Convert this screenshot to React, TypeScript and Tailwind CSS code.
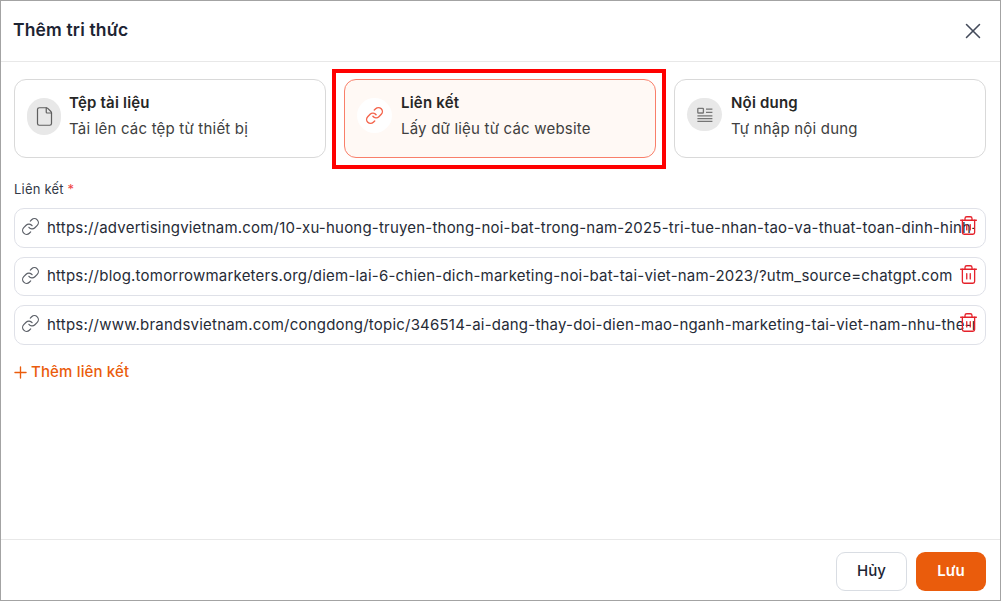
import { File, Link, Plus, Trash2, X } from "lucide-react";
import React from "react";

const links = [
  "https://advertisingvietnam.com/10-xu-huong-truyen-thong-noi-bat-trong-nam-2025-tri-tue-nhan-tao-va-thuat-toan-dinh-hinh-nganh-quang-cao",
  "https://blog.tomorrowmarketers.org/diem-lai-6-chien-dich-marketing-noi-bat-tai-viet-nam-2023/?utm_source=chatgpt.com",
  "https://www.brandsvietnam.com/congdong/topic/346514-ai-dang-thay-doi-dien-mao-nganh-marketing-tai-viet-nam-nhu-the-nao",
];

const NewsIcon = () => (
  <svg width="18" height="18" viewBox="0 0 18 18" fill="none" stroke="#757575" strokeWidth="1.3">
    <rect x="1.8" y="2.4" width="5.6" height="4.6" rx="0.6" />
    <path d="M10 3.2h6.4M10 6.4h6.4M1.4 9.8h15M1.4 12.6h15M1.4 15.4h15" />
  </svg>
);

interface CardProps {
  title: string;
  text: string;
  icon: React.ReactNode;
  iconClass: string;
  active?: boolean;
}

const SourceCard = ({ title, text, icon, iconClass, active }: CardProps) => {
  return (
    <div
      className={
        active
          ? "relative flex h-[79px] items-start gap-[9px] rounded-[12px] border border-[#f97f6a] bg-[#fff9f5] pt-[13px] pl-[12px]"
          : "relative flex h-[79px] items-start gap-[9px] rounded-[12px] border border-[#d9d9d9] bg-white pt-[13px] pl-[12px]"
      }
    >
      <div className={iconClass}>{icon}</div>
      <div className="flex flex-col gap-[6px]">
        <div className="text-[15px] leading-[20px] font-semibold tracking-[0.2px] text-[#262626]">{title}</div>
        <div className="text-[15px] leading-[20px] tracking-[0.2px] text-[#404040]">{text}</div>
      </div>
      {active && (
        <div className="pointer-events-none absolute -top-[11px] -right-[11px] -bottom-[12px] -left-[13px] border-4 border-[#ff0000]"></div>
      )}
    </div>
  );
};

const LinkRow = ({ url, tall }: { url: string; tall?: boolean }) => {
  return (
    <div
      className={
        tall
          ? "relative flex h-[40px] items-center gap-[7px] rounded-[10px] border border-[#dfe1e8] pr-[11px] pl-[6px]"
          : "relative flex h-[39px] items-center gap-[7px] rounded-[10px] border border-[#dfe1e8] pr-[11px] pl-[6px]"
      }
    >
      <Link size={19} strokeWidth={1.5} className="-mt-[3px] shrink-0 text-[#5c6068]" />
      <div className="-mt-[1px] min-w-0 flex-1 overflow-hidden text-[15px] leading-[20px] tracking-[0.21px] whitespace-nowrap text-[#262b36]">
        {url}
      </div>
      <Trash2 size={21} strokeWidth={1.5} className="absolute top-[6px] right-[6px] text-[#e5222b]" />
    </div>
  );
};

export default function App() {
  return (
    <div className="flex h-[601px] w-[1001px] flex-col border border-[#a3a3a3] bg-white font-['Inter',sans-serif]">
      <div className="flex h-[61px] shrink-0 items-center justify-between border-b border-[#e8e8e8] pr-[14px] pl-[12px]">
        <div className="-mt-[1px] text-[17.5px] font-semibold tracking-[0.15px] text-[#1d2433]">Thêm tri thức</div>
        <X size={26} strokeWidth={1.4} className="text-[#434a5a]" />
      </div>
      <div className="flex-1 pt-[17px] pr-[14px] pl-[13px]">
        <div className="grid grid-cols-3 gap-[18px]">
          <SourceCard
            title="Tệp tài liệu"
            text="Tải lên các tệp từ thiết bị"
            iconClass="mt-[5px] -mr-[1px] flex h-[37px] w-[34px] shrink-0 items-center justify-center rounded-full bg-[#e8e8e8]"
            icon={<File size={21} strokeWidth={1.4} className="text-[#5f5f5f]" />}
          />
          <SourceCard
            active
            title="Liên kết"
            text="Lấy dữ liệu từ các website"
            iconClass="mt-[5px] flex h-[35px] w-[35px] shrink-0 items-center justify-center rounded-full bg-white"
            icon={<Link size={19} strokeWidth={1.8} className="text-[#f4654d]" />}
          />
          <SourceCard
            title="Nội dung"
            text="Tự nhập nội dung"
            iconClass="mt-[5px] flex h-[33px] w-[35px] shrink-0 items-center justify-center rounded-full bg-[#e8e8e8]"
            icon={<NewsIcon />}
          />
        </div>
        <div className="mt-[22px] text-[13px] leading-[18px] tracking-[0.2px] text-[#333a47]">
          Liên kết <span className="text-[#ef4444]">*</span>
        </div>
        <div className="mt-[10px] flex flex-col gap-[9px]">
          <LinkRow tall url={links[0]} />
          <LinkRow url={links[1]} />
          <LinkRow tall url={links[2]} />
        </div>
        <div className="mt-[17px] flex items-center gap-[1px] text-[15px] leading-[20px] font-medium tracking-[0.15px] text-[#ea5c0c]">
          <Plus size={19} strokeWidth={1.7} className="-ml-[3px]" />
          Thêm liên kết
        </div>
      </div>
      <div className="flex h-[61px] shrink-0 items-start justify-end gap-[9px] border-t border-[#e8e8e8] pt-[12px] pr-[14px]">
        <button className="h-[39px] w-[71px] rounded-[9px] border border-[#d9dde3] bg-white text-[15px] font-medium text-[#1d2433]">
          Hủy
        </button>
        <button className="h-[39px] w-[70px] rounded-[9px] bg-[#ea5c0c] text-[15px] font-semibold text-white">
          Lưu
        </button>
      </div>
    </div>
  );
}
